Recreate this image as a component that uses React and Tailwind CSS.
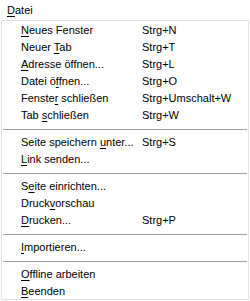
import React from "react";

const items = [
  { label: "Neues Fenster", key: 0, shortcut: "Strg+N" },
  { label: "Neuer Tab", key: 6, shortcut: "Strg+T" },
  { label: "Adresse öffnen...", key: 0, shortcut: "Strg+L" },
  { label: "Datei öffnen...", key: 7, shortcut: "Strg+O" },
  { label: "Fenster schließen", key: 6, shortcut: "Strg+Umschalt+W" },
  { label: "Tab schließen", key: 4, shortcut: "Strg+W" },
  "sep",
  { label: "Seite speichern unter...", key: 16, shortcut: "Strg+S" },
  { label: "Link senden...", key: 0 },
  "sep",
  { label: "Seite einrichten...", key: 1 },
  { label: "Druckvorschau", key: 5 },
  { label: "Drucken...", key: 0, shortcut: "Strg+P" },
  "sep",
  { label: "Importieren...", key: 0 },
  "sep",
  { label: "Offline arbeiten", key: 0 },
  { label: "Beenden", key: 0 },
];

// underline the access key letter
const Mnemonic = ({ text, index }) => (
  <span>
    {text.slice(0, index)}
    <span className="underline underline-offset-[2px]">{text[index]}</span>
    {text.slice(index + 1)}
  </span>
);

export default function App() {
  return (
    <div
      className="w-[250px] h-[301px] bg-white text-black text-[11px] leading-none overflow-hidden"
      style={{ fontFamily: '"Liberation Sans", Arial, sans-serif' }}
    >
      {/* Menu bar */}
      <div className="h-[20px] flex items-center pl-[7px]">
        <Mnemonic text="Datei" index={0} />
      </div>

      {/* Dropdown */}
      <div className="ml-[1px] w-[248px] h-[280px] border border-[#e3e3e3] pt-[1px]">
        {items.map((item, i) =>
          item === "sep" ? (
            <div key={i} className="pt-[5px] pb-[4px] px-[1px]">
              <div className="h-px bg-[#a0a0a0]" />
            </div>
          ) : (
            <div key={i} className="h-[17px] flex items-center pl-[19px]">
              <div className="w-[121px] whitespace-nowrap">
                <Mnemonic text={item.label} index={item.key} />
              </div>
              {item.shortcut && (
                <div className="whitespace-nowrap">{item.shortcut}</div>
              )}
            </div>
          )
        )}
      </div>
    </div>
  );
}
